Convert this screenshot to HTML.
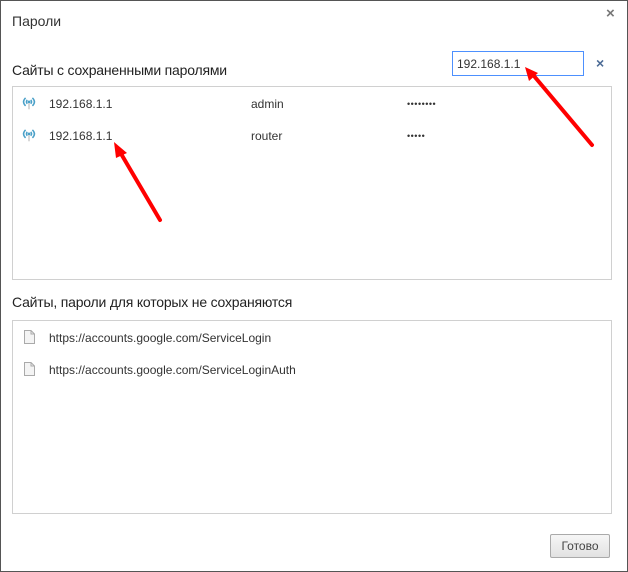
<!DOCTYPE html><html><head><meta charset="utf-8"><style>
body{margin:0;width:628px;height:572px;background:#fff;font-family:"Liberation Sans","Noto Sans CJK SC",sans-serif;font-size:12px;color:#333;position:relative;overflow:hidden}
.frame{position:absolute;left:0;top:0;width:626px;height:570px;border:1px solid #555}
.a{position:absolute;white-space:nowrap}
.box{position:absolute;left:12px;width:598px;border:1px solid #d0d0d0;height:192px}
.dots{font-size:9px;letter-spacing:0.5px;color:#333}
</style></head><body>
<div class="frame"></div>
<div class="a" style="left:12px;top:13px;font-size:14px;color:#333">Пароли</div>
<div class="a" style="left:606px;top:5px;font-size:15px;color:#777;font-weight:bold">×</div>
<div class="a" style="left:12px;top:62px;font-size:14px;color:#222;letter-spacing:-0.2px">Сайты с сохраненными паролями</div>
<div class="a" style="left:452px;top:51px;width:130px;height:23px;border:1px solid #4d90fe"></div>
<div class="a" style="left:457px;top:57px;color:#333">192.168.1.1</div>
<div class="a" style="left:596px;top:55px;color:#4a6a95;font-weight:bold;font-size:14px">×</div>
<div class="box" style="top:86px"></div>
<svg class="a" style="left:21px;top:96px" width="16" height="14" viewBox="0 0 14 12"><g fill="none" stroke="#4aa0c8" stroke-width="1.3"><path d="M4 1.5Q0.5 5 4 8.5M10 1.5Q13.5 5 10 8.5M5.5 3.3Q4 5 5.5 6.7M8.5 3.3Q10 5 8.5 6.7"/></g><circle cx="7" cy="5" r="1.2" fill="#4aa0c8"/><path d="M7 6V11.5" stroke="#bbb"/></svg>
<svg class="a" style="left:21px;top:128px" width="16" height="14" viewBox="0 0 14 12"><g fill="none" stroke="#4aa0c8" stroke-width="1.3"><path d="M4 1.5Q0.5 5 4 8.5M10 1.5Q13.5 5 10 8.5M5.5 3.3Q4 5 5.5 6.7M8.5 3.3Q10 5 8.5 6.7"/></g><circle cx="7" cy="5" r="1.2" fill="#4aa0c8"/><path d="M7 6V11.5" stroke="#bbb"/></svg>
<div class="a" style="left:49px;top:97px">192.168.1.1</div>
<div class="a" style="left:251px;top:97px">admin</div>
<div class="a dots" style="left:407px;top:99px">••••••••</div>
<div class="a" style="left:49px;top:129px">192.168.1.1</div>
<div class="a" style="left:251px;top:129px">router</div>
<div class="a dots" style="left:407px;top:131px">•••••</div>
<div class="a" style="left:12px;top:294px;font-size:14px;color:#222;letter-spacing:-0.2px">Сайты, пароли для которых не сохраняются</div>
<div class="box" style="top:320px"></div>
<svg class="a" style="left:24px;top:330px" width="11" height="14"><path d="M0.5 0.5H7L10.5 4V13.5H0.5Z" fill="#f4f4f4" stroke="#aaa"/><path d="M7 0.5V4H10.5" fill="none" stroke="#aaa"/></svg>
<svg class="a" style="left:24px;top:362px" width="11" height="14"><path d="M0.5 0.5H7L10.5 4V13.5H0.5Z" fill="#f4f4f4" stroke="#aaa"/><path d="M7 0.5V4H10.5" fill="none" stroke="#aaa"/></svg>
<div class="a" style="left:49px;top:331px">https://accounts.google.com/ServiceLogin</div>
<div class="a" style="left:49px;top:363px">https://accounts.google.com/ServiceLoginAuth</div>
<div class="a" style="left:550px;top:534px;width:58px;height:22px;border:1px solid #aaa;border-radius:2px;background:linear-gradient(#f6f6f6,#e2e2e2);text-align:center;line-height:22px;color:#444">Готово</div>
<svg class="a" style="left:0;top:0" width="628" height="572"><g stroke="#f00" stroke-width="4" stroke-linecap="round" fill="#f00"><line x1="160" y1="220" x2="120" y2="152"/><line x1="592" y1="145" x2="534" y2="76"/></g><polygon points="114,142 127,153 116,158" fill="#f00"/><polygon points="525,67 538,73 529,81" fill="#f00"/></svg>
</body></html>
